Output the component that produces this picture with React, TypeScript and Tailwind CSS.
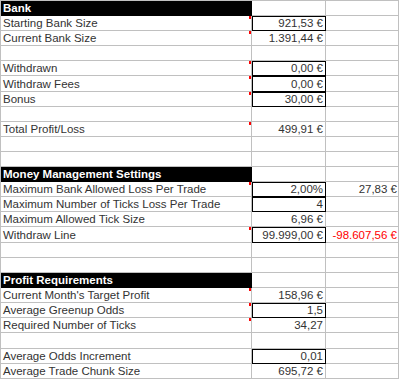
type Row = {
  label?: string;
  header?: boolean;
  value?: string;
  boxed?: boolean;
  note?: boolean;
  extra?: string;
  extraRed?: boolean;
  tall?: boolean;
};

const rows: Row[] = [
  { label: "Bank", header: true },
  { label: "Starting Bank Size", value: "921,53 €", boxed: true, note: true },
  { label: "Current Bank Size", value: "1.391,44 €", note: true },
  {},
  { label: "Withdrawn", value: "0,00 €", boxed: true, note: true },
  { label: "Withdraw Fees", value: "0,00 €", boxed: true, note: true, tall: true },
  { label: "Bonus", value: "30,00 €", boxed: true, note: true },
  {},
  { label: "Total Profit/Loss", value: "499,91 €", note: true },
  {},
  {},
  { label: "Money Management Settings", header: true },
  { label: "Maximum Bank Allowed Loss Per Trade", value: "2,00%", boxed: true, note: true, extra: "27,83 €" },
  { label: "Maximum Number of Ticks Loss Per Trade", value: "4", boxed: true },
  { label: "Maximum Allowed Tick Size", value: "6,96 €" },
  { label: "Withdraw Line", value: "99.999,00 €", boxed: true, note: true, extra: "-98.607,56 €", extraRed: true, tall: true },
  {},
  {},
  { label: "Profit Requirements", header: true },
  { label: "Current Month's Target Profit", value: "158,96 €", note: true },
  { label: "Average Greenup Odds", value: "1,5", boxed: true, note: true },
  { label: "Required Number of Ticks", value: "34,27", note: true },
  { tall: true },
  { label: "Average Odds Increment", value: "0,01", boxed: true },
  { label: "Average Trade Chunk Size", value: "695,72 €" },
];

export default function App() {
  return (
    <div
      className="w-[400px] h-[379px] overflow-hidden bg-white text-[11.5px] text-[#333]"
      style={{ fontFamily: '"Liberation Sans", Arial, sans-serif' }}
    >
      <div className="border-t border-l border-[#c0c0c0] w-[399px]">
        {rows.map((r, i) => (
          <div
            key={i}
            className={`grid grid-cols-[251px_74px_73px] ${r.tall ? "h-[16px]" : "h-[15px]"}`}
          >
            {/* label column */}
            <div
              className={`relative flex items-end px-[2px] whitespace-nowrap overflow-hidden border-b border-r ${
                r.header
                  ? "bg-black border-black text-white font-bold"
                  : "border-[#c0c0c0]"
              }`}
            >
              <span className="leading-[13px]">{r.label}</span>
              {r.note && (
                <span className="absolute right-0 top-0 w-[2px] h-[3px] bg-[#ff0000]" />
              )}
            </div>

            {/* value column */}
            <div
              className={`flex items-end justify-end pr-[2px] whitespace-nowrap overflow-hidden border-b border-r ${
                r.boxed
                  ? "border-black shadow-[inset_1px_1px_0_0_#000]"
                  : "border-[#c0c0c0]"
              }`}
            >
              <span className="leading-[13px]">{r.value}</span>
            </div>

            {/* extra column */}
            <div
              className={`flex items-end justify-end pr-[1px] whitespace-nowrap border-b border-r border-[#c0c0c0] ${
                r.extraRed ? "text-[#ff0000]" : ""
              }`}
            >
              <span className="leading-[13px]">{r.extra}</span>
            </div>
          </div>
        ))}
      </div>
    </div>
  );
}
